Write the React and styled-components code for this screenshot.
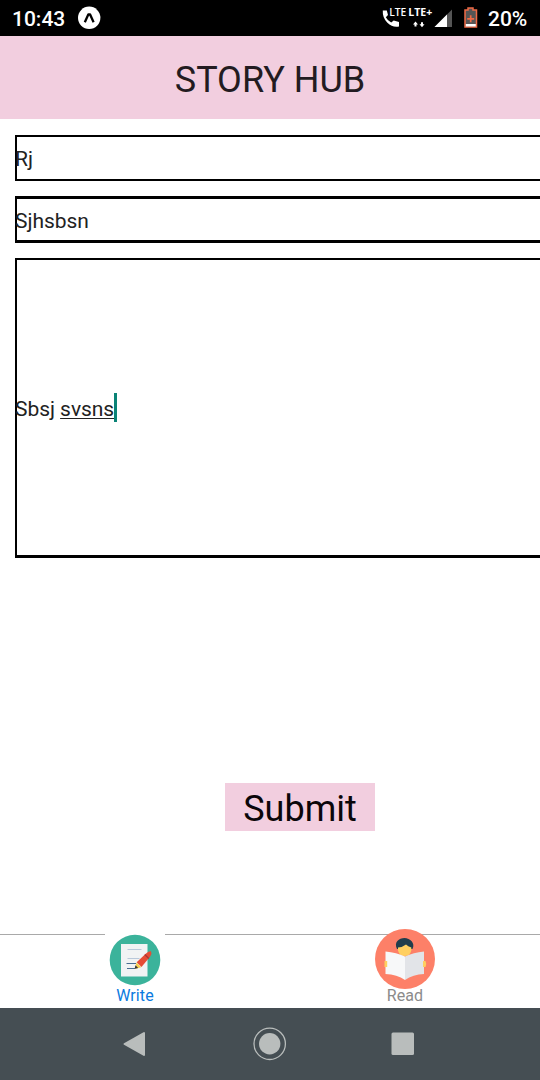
import React from "react";
import styled, { createGlobalStyle } from "styled-components";

const GlobalStyle = createGlobalStyle`
  * { box-sizing: border-box; }
  body { margin: 0; background: #fff; font-family: Roboto, "Liberation Sans", sans-serif; }
`;

const Screen = styled.div`
  width: 540px;
  height: 1080px;
  display: flex;
  flex-direction: column;
  overflow: hidden;
  background: #fff;
`;

const StatusBar = styled.header`
  height: 36px;
  flex: none;
  display: flex;
  align-items: center;
  padding: 2px 12px 0;
  background: #000;
  color: #fff;
  font-size: 21px;
  font-weight: 500;
  line-height: 34px;
`;

const Clock = styled.span`
  width: 66px;
  letter-spacing: 0;
  white-space: nowrap;
`;

const AppBadge = styled.svg`
  display: block;
  margin-top: -2px;
`;

const StatusIcons = styled.svg`
  display: block;
  margin: -2px 8px 0 auto;
`;

const Battery = styled.span`
  width: 40px;
  white-space: nowrap;
`;

const TitleBar = styled.div`
  height: 83px;
  flex: none;
  display: flex;
  align-items: center;
  justify-content: center;
  background: #f2cedf;
`;

const Title = styled.h1`
  margin: 5px 0 0;
  font-size: 36px;
  font-weight: 400;
  line-height: 44px;
  letter-spacing: 0;
  color: #231b21;
  white-space: nowrap;
`;

const Form = styled.main`
  flex: 1;
  min-height: 0;
  display: flex;
  flex-direction: column;
  gap: 15px;
  padding: 16px 0 0 15px;
`;

const Field = styled.div`
  width: 540px;
  height: ${(p) => p.$height}px;
  flex: none;
  display: flex;
  align-items: center;
  border: solid #000;
  border-width: ${(p) => p.$top}px 2px ${(p) => p.$bottom}px;
  font-size: 21px;
  line-height: 28px;
  color: #222;
`;

const Value = styled.span`
  margin-left: -2px;
  padding-top: 2px;
  white-space: nowrap;
  letter-spacing: -0.05px;
`;

const Composing = styled.span`
  text-decoration: underline;
  text-decoration-thickness: 1px;
  text-underline-offset: 2px;
  text-decoration-skip-ink: none;
`;

const Caret = styled.span`
  width: 3px;
  height: 29px;
  margin-left: -0.5px;
  background: #0a8376;
`;

const Submit = styled.button`
  width: 150px;
  height: 48px;
  margin: 210px 0 0 210px;
  padding: 5px 0 0;
  border: 0;
  background: #f2cedf;
  color: #0b060a;
  font-family: inherit;
  font-size: 36px;
  line-height: 43px;
  letter-spacing: 0;
`;

const TabBar = styled.nav`
  height: 80px;
  flex: none;
  display: flex;
`;

const Tab = styled.div`
  flex: 1;
  display: flex;
  flex-direction: column;
  align-items: center;
  background: linear-gradient(#a9a9a9, #a9a9a9) 0 6px / 100% 1px no-repeat;
  color: ${(p) => (p.$active ? "#0b7ae0" : "#8b8b8b")};
  font-size: 16px;
  line-height: 16px;
  letter-spacing: 0.1px;
`;

const TabIcon = styled.svg`
  display: block;
  width: 60px;
  height: 60px;
  flex: none;
  margin-top: 1px;
  margin-bottom: -1px;
  background: ${(p) => (p.$solid ? "#fff" : "transparent")};
`;

const NavBar = styled.footer`
  height: 72px;
  flex: none;
  display: flex;
  justify-content: space-between;
  align-items: center;
  padding: 0 124px 0 121px;
  background: #454e53;
`;

const NavIcon = styled.svg`
  display: block;
`;

export default function App() {
  return (
    <>
      <GlobalStyle />
      <Screen>
        <StatusBar>
          <Clock>10:43</Clock>
          <AppBadge width="24" height="24" viewBox="0 0 24 24">
            <circle cx="11.200" cy="11.800" r="11.200" fill="#fff" />
            <path d="M6.800 16.300 10.300 8.500h1.800L15.600 16.300" fill="none" stroke="#000" strokeWidth="2.300" strokeLinejoin="round" />
          </AppBadge>
          <StatusIcons width="98" height="36" viewBox="382 0 98 36">
            <path d="M382.800 10.500h4l1.200 4.500-2.200 2.300q2 3.700 5.400 5.200l2.500-2 5.300 1.500v4.500q-6.500 1.300-11.600-3.700Q382.300 17.700 382.800 10.500z" fill="#fff" />
            <text x="389.300" y="16" fontFamily="Open Sans, sans-serif" fontSize="10" fontWeight="600" fill="#fff" textLength="17" lengthAdjust="spacingAndGlyphs">LTE</text>
            <text x="408.300" y="16" fontFamily="Open Sans, sans-serif" fontSize="11" fontWeight="700" fill="#fff" textLength="24" lengthAdjust="spacingAndGlyphs">LTE+</text>
            <path d="m415.500 21.500 2.500 3h-1.500v2h-2v-2H413zM422 27.200l-2.500-3h1.500v-2h2v2h1.500z" fill="#fff" />
            <path d="M434.500 27 452 9.500V27z" fill="#555" />
            <path d="M434.500 27 447 14.500V27z" fill="#fff" />
            <path d="M468 8h5v2h3.500v17H465V10h3z" fill="#555" stroke="#f06a45" strokeWidth="1.500" />
            <path d="M465.800 24h10v2.500h-10z" fill="#fff" />
            <path d="M470.700 15.300v7M467.200 18.800h7" stroke="#f06a45" strokeWidth="1.700" />
          </StatusIcons>
          <Battery>20%</Battery>
        </StatusBar>

        <TitleBar>
          <Title>STORY HUB</Title>
        </TitleBar>

        <Form>
          <Field $height={46} $top={2} $bottom={2}>
            <Value>Rj</Value>
          </Field>
          <Field $height={47} $top={3} $bottom={3}>
            <Value>Sjhsbsn</Value>
          </Field>
          <Field $height={300} $top={2} $bottom={3}>
            <Value>
              Sbsj <Composing>svsns</Composing>
            </Value>
            <Caret />
          </Field>
          <Submit>Submit</Submit>
        </Form>

        <TabBar>
          <Tab $active>
            <TabIcon $solid viewBox="0 0 60 60">
              <circle cx="30" cy="31" r="25.300" fill="#3bb39b" />
              <path d="M16 15h26.500v32.500H16z" fill="#f1f3f4" />
              <path d="M22.500 20.500h14M22.500 29.500h12" stroke="#b9c8da" />
              <path d="M21.500 34.500h9.500M22 39.500h8" stroke="#496d92" />
              <path d="m31.500 33.500 4.700 4.700-6.400 1.800z" fill="#f7cf4c" />
              <path d="m29.600 39.800.9-3.500 2.700 2.700z" fill="#34343b" />
              <path d="M31.700 33.200 41 24.500q3-2.700 5-2.300 1.200 2.200-.8 5.300L36.500 38z" fill="#e64c35" />
              <path d="m39.800 25.600 4 4" stroke="#a93736" strokeWidth="1.400" />
            </TabIcon>
            Write
          </Tab>
          <Tab>
            <TabIcon viewBox="0 0 60 60">
              <circle cx="30" cy="30" r="30" fill="#fd8068" />
              <path d="M22 20C18.500 13 24 9 29.500 9s11 5 8 11z" fill="#213d4c" />
              <path d="M23 18.500q5-.500 8-3 2 2 5.300 3v3q-1.300 5.500-6.600 5.500T23 21.500z" fill="#ffcf60" />
              <path d="M10.500 22.500Q21.500 23.500 30 27.500v23.500Q22 45.500 10.500 45z" fill="#f7f8f9" />
              <path d="M49 22.500Q38.500 23.500 30 27.500v23.500q8-5.500 19-6z" fill="#e2e4e8" />
              <path d="M9.500 32h2.700v6H9.500zM48 32h2.500q1.500 3 0 6H48z" fill="#ffcf60" />
            </TabIcon>
            Read
          </Tab>
        </TabBar>

        <NavBar>
          <NavIcon width="26" height="28" viewBox="0 0 26 28">
            <path d="M3.500 14 23 3v22z" fill="#b9bdbc" stroke="#b9bdbc" strokeWidth="2" strokeLinejoin="round" />
          </NavIcon>
          <NavIcon width="36" height="36" viewBox="0 0 36 36">
            <circle cx="18.700" cy="17.800" r="15.700" fill="none" stroke="#b9bdbc" strokeWidth="1.300" />
            <circle cx="18.700" cy="17.800" r="10.700" fill="#b9bdbc" />
          </NavIcon>
          <NavIcon width="26" height="26" viewBox="0 0 26 26">
            <rect x="1.500" y="1.500" width="22.500" height="22.500" rx="1.500" fill="#b9bdbc" />
          </NavIcon>
        </NavBar>
      </Screen>
    </>
  );
}
